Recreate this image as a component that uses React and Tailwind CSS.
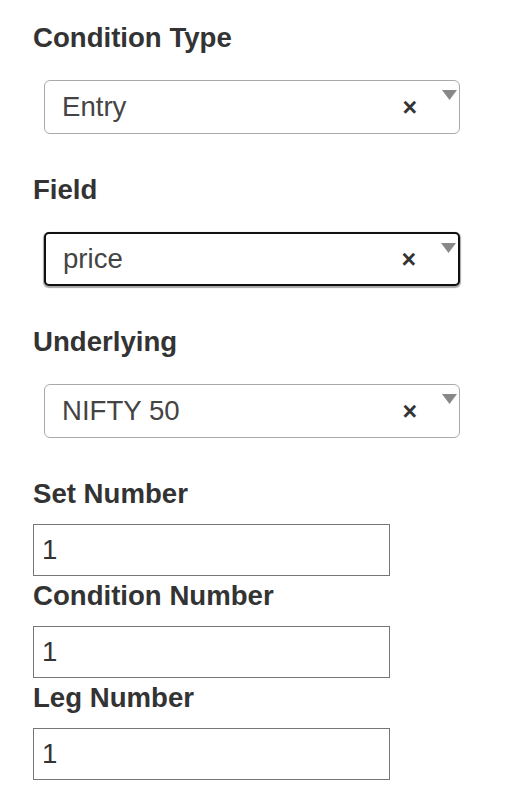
import React from "react";

const SelectBox = ({ value, focused }) => {
  return (
    <div
      className={
        "relative ml-[11px] w-[416px] h-[54px] flex items-center bg-white " +
        (focused
          ? "border-2 border-[#111] rounded-[5px] shadow-[0_1px_1px_1px_rgba(0,0,0,0.35)]"
          : "border-[1.5px] border-[#aaa] rounded-[6px]")
      }
    >
      <span className="pl-[17px] text-[27.6px] text-[#444] leading-none flex-1">{value}</span>
      <span className="mr-[42px] text-[25px] font-bold text-[#333] leading-none">×</span>
      <svg className="absolute right-[2px] top-[9px]" width="15" height="10" viewBox="0 0 15 10">
        <polygon points="0,0 15,0 7.5,10" fill="#888" />
      </svg>
    </div>
  );
};

const NumberInput = ({ value }) => {
  return (
    <div className="w-[357px] h-[52px] border border-[#767676] flex items-center bg-white">
      <span className="pl-[8px] text-[27.6px] text-[#333] leading-none">{value}</span>
    </div>
  );
};

const Label = ({ children }) => (
  <div className="h-[32px] leading-[28px] text-[27.6px] font-bold text-[#333]">{children}</div>
);

export default function App() {
  return (
    <div
      className="min-h-screen bg-white px-[33px] pt-[24px]"
      style={{ fontFamily: '"Liberation Sans", Arial, sans-serif' }}
    >
      {[
        { label: "Condition Type", value: "Entry" },
        { label: "Field", value: "price", focused: true },
        { label: "Underlying", value: "NIFTY 50" },
      ].map((s) => (
        <div key={s.label} className="mb-[42px]">
          <div className="mb-[24px]">
            <Label>{s.label}</Label>
          </div>
          <SelectBox value={s.value} focused={s.focused} />
        </div>
      ))}
      {["Set Number", "Condition Number", "Leg Number"].map((l) => (
        <div key={l} className="mb-[6px]">
          <div className="mb-[12px]">
            <Label>{l}</Label>
          </div>
          <NumberInput value="1" />
        </div>
      ))}
    </div>
  );
}
